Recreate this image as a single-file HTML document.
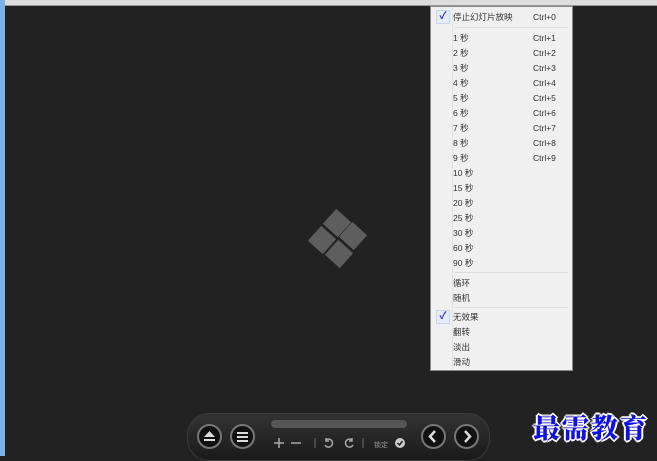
<!DOCTYPE html>
<html><head><meta charset="utf-8"><style>
*{margin:0;padding:0;box-sizing:border-box}
body{width:657px;height:456px;overflow:hidden;background:#222;position:relative;font-family:"Liberation Sans","Noto Sans CJK SC",sans-serif}
.top{position:absolute;left:0;top:0;width:657px;height:6px;background:#dcdcdc;border-bottom:1px solid #999}
.blue{position:absolute;left:0;top:0;width:5px;height:456px;background:#7ab4e6}
.menu{position:absolute;left:430px;top:6px;width:143px;height:365px;background:#f0f0f0;border:1px solid #888;font-size:8.5px;color:#333}
.menu .gut{position:absolute;left:21px;top:0;bottom:0;border-left:1px solid #e2e2e2}
.it{position:absolute;left:22px;height:12px;line-height:12px}
.k{position:absolute;left:102px;height:12px;line-height:12px}
.sep{position:absolute;left:24px;right:4px;border-top:1px solid #dcdcdc}
.chk{position:absolute;left:5px;width:14px;height:14px;background:#e6ecf5;border:1px solid #c9d6ea;color:#3030c0;font-size:10px;text-align:center;line-height:12px;font-weight:bold}
.bar{position:absolute;left:187px;top:413px;width:303px;height:48px;border-radius:22px;background:linear-gradient(#333,#1a1a1a);border:1px solid #3a3a3a}
.btn{position:absolute;top:424px;width:25px;height:25px;border-radius:50%;background:#111;border:2px solid #777;color:#ddd}
.wm{position:absolute;left:533px;top:407px;font-family:"Noto Serif CJK SC",serif;font-weight:900;font-size:27px;color:#1010e0;letter-spacing:2px;text-shadow:1px 1px 0 #fff,-1px -1px 0 #fff,1px -1px 0 #fff,-1px 1px 0 #fff,2px 0 0 #fff,-2px 0 0 #fff,0 2px 0 #fff,0 -2px 0 #fff}
</style></head><body>
<div class="top"></div>
<div class="blue"></div>
<svg style="position:absolute;left:300px;top:205px" width="80" height="70">
<g fill="#5e5e5e">
<rect x="-10" y="-10" width="20" height="20" transform="translate(37,18) rotate(42)"/>
<rect x="-10" y="-10" width="20" height="20" transform="translate(53,31) rotate(42)"/>
<rect x="-10" y="-10" width="20" height="20" transform="translate(22,35) rotate(42)"/>
<rect x="-10" y="-10" width="20" height="20" transform="translate(39,49) rotate(42)"/>
</g></svg>
<div class="menu">
<div class="gut"></div>
<div class="chk" style="top:3px">✓</div>
<div class="it" style="top:4px">停止幻灯片放映</div><div class="k" style="top:4px">Ctrl+0</div>
<div class="sep" style="top:20px"></div>
<div class="it" style="top:25px">1 秒</div><div class="k" style="top:25px">Ctrl+1</div>
<div class="it" style="top:40px">2 秒</div><div class="k" style="top:40px">Ctrl+2</div>
<div class="it" style="top:55px">3 秒</div><div class="k" style="top:55px">Ctrl+3</div>
<div class="it" style="top:70px">4 秒</div><div class="k" style="top:70px">Ctrl+4</div>
<div class="it" style="top:85px">5 秒</div><div class="k" style="top:85px">Ctrl+5</div>
<div class="it" style="top:100px">6 秒</div><div class="k" style="top:100px">Ctrl+6</div>
<div class="it" style="top:115px">7 秒</div><div class="k" style="top:115px">Ctrl+7</div>
<div class="it" style="top:130px">8 秒</div><div class="k" style="top:130px">Ctrl+8</div>
<div class="it" style="top:145px">9 秒</div><div class="k" style="top:145px">Ctrl+9</div>
<div class="it" style="top:160px">10 秒</div>
<div class="it" style="top:175px">15 秒</div>
<div class="it" style="top:190px">20 秒</div>
<div class="it" style="top:205px">25 秒</div>
<div class="it" style="top:220px">30 秒</div>
<div class="it" style="top:235px">60 秒</div>
<div class="it" style="top:250px">90 秒</div>
<div class="sep" style="top:265px"></div>
<div class="it" style="top:270px">循环</div>
<div class="it" style="top:285px">随机</div>
<div class="sep" style="top:300px"></div>
<div class="chk" style="top:303px">✓</div>
<div class="it" style="top:304px">无效果</div>
<div class="it" style="top:319px">翻转</div>
<div class="it" style="top:334px">淡出</div>
<div class="it" style="top:349px">滑动</div>
</div>
<div class="bar"></div>
<div style="position:absolute;left:271px;top:420px;width:136px;height:8px;border-radius:4px;background:#555"></div>
<div class="btn" style="left:197px"><svg width="21" height="21"><path d="M5 11 L10.5 5 L16 11Z M5 13h11v2H5z" fill="#ddd"/></svg></div>
<div class="btn" style="left:230px"><svg width="21" height="21"><path d="M5 6h11v2H5zM5 10h11v2H5zM5 14h11v2H5z" fill="#ddd"/></svg></div>
<div class="btn" style="left:421px"><svg width="21" height="21"><path d="M12 5 L7 10.5 L12 16" stroke="#ddd" stroke-width="2.5" fill="none"/></svg></div>
<div class="btn" style="left:454px"><svg width="21" height="21"><path d="M9 5 L14 10.5 L9 16" stroke="#ddd" stroke-width="2.5" fill="none"/></svg></div>
<svg style="position:absolute;left:270px;top:436px" width="140" height="14">
<g stroke="#aaa" stroke-width="1.5" fill="none">
<path d="M4 7h10M9 2v10"/><path d="M21 7h10"/>
<path d="M45 2v10" stroke="#555"/>
<path d="M56 4 a4 4 0 1 1 -1 5 M56 2v3h3"/>
<path d="M82 4 a4 4 0 1 0 1 5 M82 2v3h-3"/>
<path d="M93 2v10" stroke="#555"/>
</g>
<text x="104" y="11" font-size="7" fill="#999" font-family="Noto Sans CJK SC,sans-serif">锁定</text>
<circle cx="130" cy="7" r="5" fill="#ccc"/><path d="M127.5 7l2 2 3-4" stroke="#222" stroke-width="1.5" fill="none"/>
</svg>
<div class="wm">最需教育</div>
</body></html>
